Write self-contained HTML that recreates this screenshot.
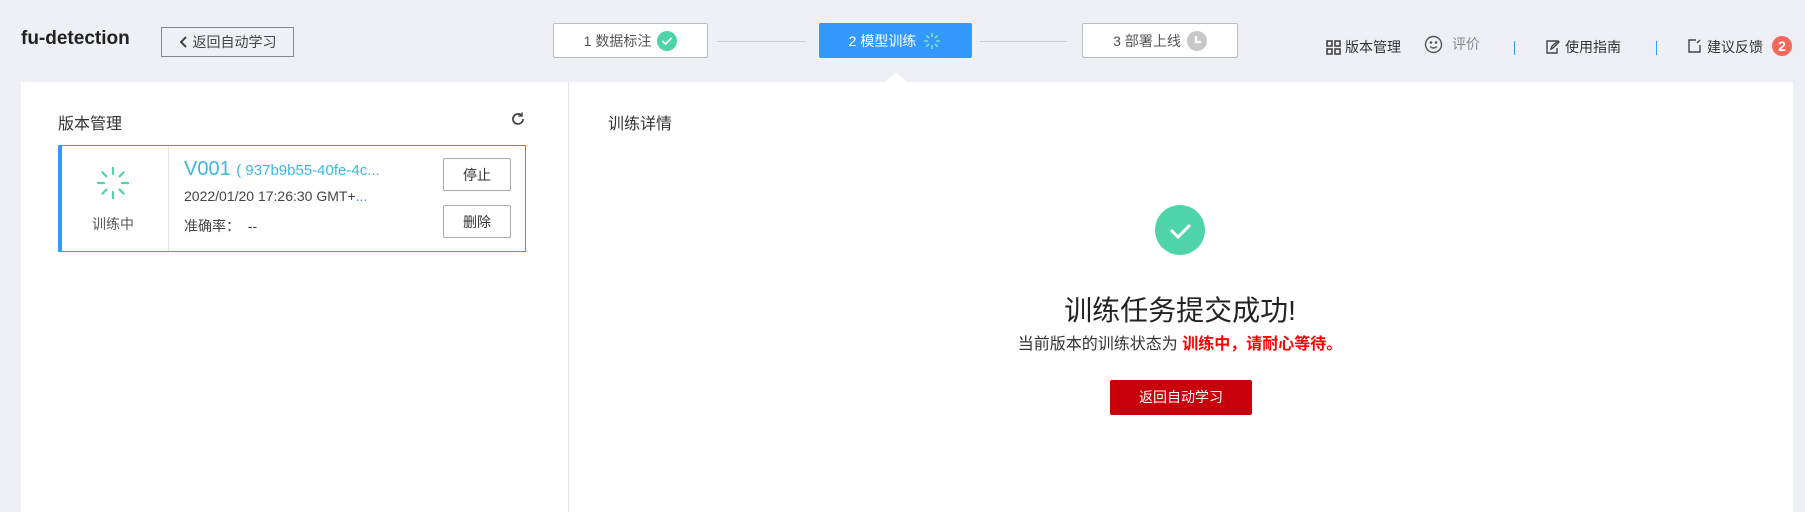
<!DOCTYPE html>
<html><head><meta charset="utf-8"><style>
*{box-sizing:border-box;margin:0;padding:0}
body{width:1805px;height:506px;background:#eef0f5;font-family:"Liberation Sans","Noto Sans CJK SC",sans-serif;color:#333;position:relative;overflow:hidden}
.a{position:absolute}
.step{position:absolute;top:23px;height:35px;border:1px solid #b8bcc4;background:#fff;font-size:14px;color:#555;display:flex;align-items:center;justify-content:center;gap:6px;border-radius:2px}
.line{position:absolute;top:41px;height:1px;background:#c8cbd2}
.nav{position:absolute;top:38px;font-size:14px;color:#333;line-height:18px}
.btn{position:absolute;left:443px;width:68px;height:33px;border:1px solid #aaa;border-radius:2px;background:#fff;font-size:14px;display:flex;align-items:center;justify-content:center;color:#333}
</style></head><body>
<div class="a" style="left:21px;top:28px;font-size:19px;font-weight:bold;color:#222">fu-detection</div>
<div class="a" style="left:161px;top:27px;width:133px;height:30px;border:1px solid #888;font-size:14px;color:#444;display:flex;align-items:center;justify-content:center;gap:4px"><svg width="10" height="12"><path d="M7 1L2 6l5 5" stroke="#444" stroke-width="2" fill="none"/></svg>返回自动学习</div>

<div class="step" style="left:553px;width:155px">1 数据标注<svg width="20" height="20"><circle cx="10" cy="10" r="10" fill="#4fd3a8"/><path d="M5.5 10l3 3 6-6" stroke="#fff" stroke-width="1.8" fill="none"/></svg></div>
<div class="line" style="left:717px;width:88px"></div>
<div class="step" style="left:819px;width:153px;background:#3399ff;border-color:#3399ff;color:#fff">2 模型训练<svg width="20" height="20" stroke="#7ee0c8" stroke-width="1.6"><path d="M10 2v4M10 14v4M2 10h4M14 10h4M4.3 4.3l2.8 2.8M12.9 12.9l2.8 2.8M4.3 15.7l2.8-2.8M12.9 7.1l2.8-2.8"/></svg></div>
<div class="line" style="left:980px;width:87px"></div>
<div class="step" style="left:1082px;width:156px">3 部署上线<svg width="20" height="20"><circle cx="10" cy="10" r="10" fill="#c8c8c8"/><path d="M9 5v6h5" stroke="#fff" stroke-width="2.2" fill="none"/></svg></div>

<svg class="a" style="left:1326px;top:40px" width="15" height="15" fill="none" stroke="#444" stroke-width="1.6"><rect x="1" y="1" width="5" height="5"/><rect x="9" y="1" width="5" height="5"/><rect x="1" y="9" width="5" height="5"/><rect x="9" y="9" width="5" height="5"/></svg>
<div class="nav" style="left:1345px">版本管理</div>
<svg class="a" style="left:1424px;top:35px" width="19" height="19" fill="none" stroke="#555" stroke-width="1.4"><circle cx="9.5" cy="9.5" r="8"/><path d="M6 11.5q3.5 3 7 0"/><circle cx="7" cy="7.5" r=".6"/><circle cx="12" cy="7.5" r=".6"/></svg>
<div class="nav" style="left:1452px;top:35px;color:#888">评价</div>
<div class="a" style="left:1514px;top:41px;width:1px;height:14px;background:#3399ff"></div>
<svg class="a" style="left:1546px;top:40px" width="14" height="14" fill="none" stroke="#444" stroke-width="1.4"><path d="M11 1H1v12h10V8M5 9l1-3 6-5 1 1-6 6z"/></svg>
<div class="nav" style="left:1565px">使用指南</div>
<div class="a" style="left:1656px;top:41px;width:1px;height:14px;background:#3399ff"></div>
<svg class="a" style="left:1688px;top:39px" width="14" height="14" fill="none" stroke="#444" stroke-width="1.4"><path d="M8 1H1v12h11V6M9 4l3-3"/></svg>
<div class="nav" style="left:1707px">建议反馈</div>
<div class="a" style="left:1772px;top:36px;width:20px;height:20px;border-radius:50%;background:#f2695c;color:#fff;font-size:14px;font-weight:bold;text-align:center;line-height:20px">2</div>

<div class="a" style="left:21px;top:82px;width:1772px;height:430px;background:#fff"></div>
<div class="a" style="left:885px;top:72px;width:0;height:0;border-left:11px solid transparent;border-right:11px solid transparent;border-bottom:10px solid #fff"></div>
<div class="a" style="left:568px;top:82px;width:1px;height:430px;background:#e6e6e6"></div>

<div class="a" style="left:58px;top:110px;font-size:16px;color:#333">版本管理</div>
<svg class="a" style="left:510px;top:111px" width="16" height="16" fill="none" stroke="#444" stroke-width="1.8"><path d="M13 8a5 5 0 1 1-1.5-3.6"/><path d="M12 1.5v3.5H8.5" stroke-width="1.5"/></svg>
<div class="a" style="left:608px;top:110px;font-size:16px;color:#333">训练详情</div>

<div class="a" style="left:58px;top:145px;width:468px;height:107px;border:1px solid #3399ff;border-left:4px solid #3399ff"></div>
<div class="a" style="left:168px;top:146px;width:1px;height:105px;background:#e6e6e6"></div>
<svg class="a" style="left:96px;top:166px" width="34" height="34" stroke="#4fd3a8" stroke-width="2.2"><path d="M17 2v6M17 26v6M2 17h6M26 17h6M6.4 6.4l4 4M23.6 23.6l4 4M6.4 27.6l4-4M23.6 10.4l4-4" stroke-linecap="round"/></svg>
<div class="a" style="left:92px;top:214px;font-size:14px;color:#555">训练中</div>
<div class="a" style="left:184px;top:158px;font-size:20px;color:#3bb8e0">V001 <span style="font-size:15px">( 937b9b55-40fe-4c...</span></div>
<div class="a" style="left:184px;top:188px;font-size:14px;color:#444">2022/01/20 17:26:30 GMT+<span style="color:#3399ff">...</span></div>
<div class="a" style="left:184px;top:216px;font-size:14px;color:#444">准确率：&nbsp;&nbsp;--</div>
<div class="btn" style="top:158px">停止</div>
<div class="btn" style="top:205px">删除</div>

<svg class="a" style="left:1155px;top:205px" width="50" height="50"><circle cx="25" cy="25" r="25" fill="#4fd3a8"/><path d="M16 25l7 7 12-12" stroke="#fff" stroke-width="3" fill="none"/></svg>
<div class="a" style="left:980px;top:294px;width:400px;text-align:center;font-size:28px;color:#222;line-height:34px">训练任务提交成功!</div>
<div class="a" style="left:980px;top:334px;width:400px;text-align:center;font-size:16px;color:#333;line-height:22px">当前版本的训练状态为 <b style="color:#f00">训练中，请耐心等待。</b></div>
<div class="a" style="left:1110px;top:380px;width:142px;height:35px;background:#c7000b;border-radius:2px;color:#fff;font-size:14px;text-align:center;line-height:35px">返回自动学习</div>
</body></html>
